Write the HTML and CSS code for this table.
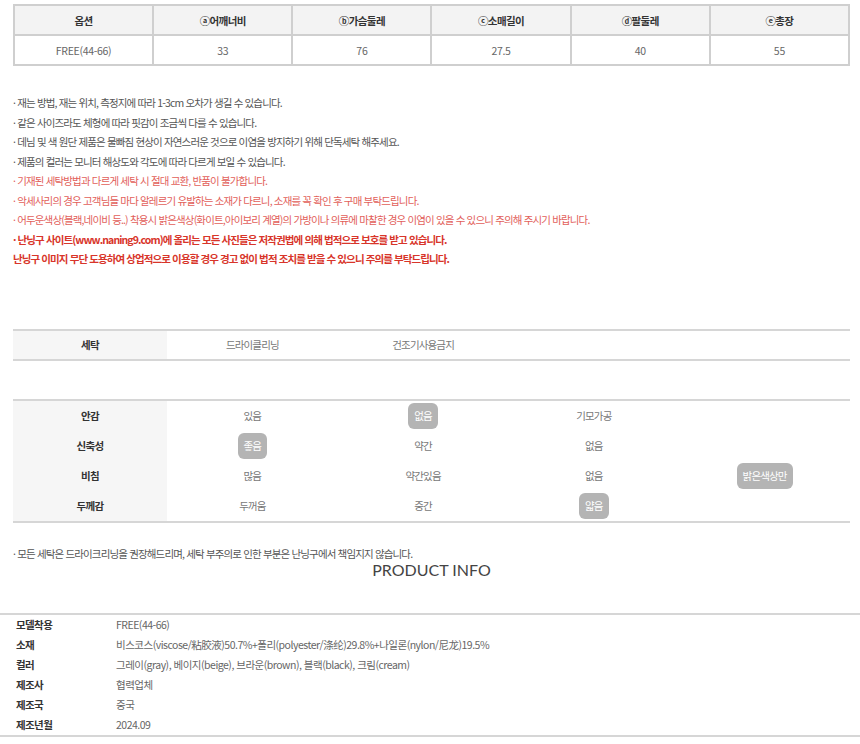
FILE: index.html
```html
<!DOCTYPE html>
<html lang="ko">
<head>
    <meta charset="UTF-8" />
    <title>상품 상세</title>
    <link rel="stylesheet" href="styles.css">
</head>
<body>
<div class="wrap">
    <table class="size">
        <tr>
            <th>옵션</th>
            <th>ⓐ어깨너비</th>
            <th>ⓑ가슴둘레</th>
            <th>ⓒ소매길이</th>
            <th>ⓓ팔둘레</th>
            <th>ⓔ총장</th>
        </tr>
        <tr>
            <td>FREE(44-66)</td>
            <td>33</td>
            <td>76</td>
            <td>27.5</td>
            <td>40</td>
            <td>55</td>
        </tr>
    </table>

    <ul class="notes">
        <li>· 재는 방법, 재는 위치, 측정지에 따라 1-3cm 오차가 생길 수 있습니다.</li>
        <li>· 같은 사이즈라도 체형에 따라 핏감이 조금씩 다를 수 있습니다.</li>
        <li>· 데님 및 색 원단 제품은 물빠짐 현상이 자연스러운 것으로 이염을 방지하기 위해 단독세탁 해주세요.</li>
        <li>· 제품의 컬러는 모니터 해상도와 각도에 따라 다르게 보일 수 있습니다.</li>
        <li class="red">· 기재된 세탁방법과 다르게 세탁 시 절대 교환, 반품이 불가합니다.</li>
        <li class="red">· 악세사리의 경우 고객님들 마다 알레르기 유발하는 소재가 다르니, 소재를 꼭 확인 후 구매 부탁드립니다.</li>
        <li class="red">· 어두운색상(블랙,네이비 등..) 착용시 밝은색상(화이트,아이보리 계열)의 가방이나 의류에 마찰한 경우 이염이 있을 수 있으니 주의해 주시기 바랍니다.</li>
        <li class="strong">· 난닝구 사이트(www.naning9.com)에 올리는 모든 사진들은 저작권법에 의해 법적으로 보호를 받고 있습니다.</li>
        <li class="strong">난닝구 이미지 무단 도용하여 상업적으로 이용할 경우 경고 없이 법적 조치를 받을 수 있으니 주의를 부탁드립니다.</li>
    </ul>

    <table class="grid wash">
        <tr>
            <th>세탁</th>
            <td>드라이클리닝</td>
            <td>건조기사용금지</td>
            <td></td>
            <td></td>
        </tr>
    </table>

    <table class="grid feel">
        <tr>
            <th>안감</th>
            <td>있음</td>
            <td><span class="on">없음</span></td>
            <td>기모가공</td>
            <td></td>
        </tr>
        <tr>
            <th>신축성</th>
            <td><span class="on">좋음</span></td>
            <td>약간</td>
            <td>없음</td>
            <td></td>
        </tr>
        <tr>
            <th>비침</th>
            <td>많음</td>
            <td>약간있음</td>
            <td>없음</td>
            <td><span class="on">밝은색상만</span></td>
        </tr>
        <tr>
            <th>두께감</th>
            <td>두꺼움</td>
            <td>중간</td>
            <td><span class="on">얇음</span></td>
            <td></td>
        </tr>
    </table>

    <p class="foot">· 모든 세탁은 드라이크리닝을 권장해드리며, 세탁 부주의로 인한 부분은 난닝구에서 책임지지 않습니다.</p>
    <h2 class="title">PRODUCT INFO</h2>
</div>

<table class="info">
    <tr><th>모델착용</th><td>FREE(44-66)</td></tr>
    <tr><th>소재</th><td>비스코스(viscose/粘胶液)50.7%+폴리(polyester/涤纶)29.8%+나일론(nylon/尼龙)19.5%</td></tr>
    <tr><th>컬러</th><td>그레이(gray), 베이지(beige), 브라운(brown), 블랙(black), 크림(cream)</td></tr>
    <tr><th>제조사</th><td>협력업체</td></tr>
    <tr><th>제조국</th><td>중국</td></tr>
    <tr><th>제조년월</th><td>2024.09</td></tr>
</table>
</body>
</html>
```

FILE: styles.css
```css
* {margin:0; padding:0;}
ul {list-style: none;}
body {
    font-family: "Noto Sans CJK KR", "Noto Sans", sans-serif;
    font-size: 10.5px;
    color: #555;
    background: #fff;
}
table {
    border-collapse: collapse;
    border-spacing: 0;
}
th, td {
    padding: 0;
}
.wrap {
    padding: 4px 10px 0 13px;
}

/* 사이즈표 */
.size {
    width: 837px;
    table-layout: fixed;
    border: 2px solid #cfcfcf;
}
.size th,
.size td {
    border: 2px solid #cfcfcf;
    text-align: center;
    height: 28px;
    letter-spacing: -0.6px;
}
.size th {
    background-color: #f3f3f3;
    color: #333;
    font-weight: bold;
}
.size td {
    color: #666;
    letter-spacing: -0.3px;
}

/* 안내문 */
.notes {
    margin-top: 27px;
    line-height: 19.5px;
    letter-spacing: -0.85px;
    color: #555;
}
.notes .red {
    color: #e2605a;
}
.notes .strong {
    color: #d8352a;
    font-weight: bold;
    letter-spacing: -0.9px;
}

/* 세탁 / 특성 표 */
.grid {
    width: 837px;
    table-layout: fixed;
    border-top: 2px solid #d6d6d6;
    border-bottom: 2px solid #d6d6d6;
}
.grid th {
    width: 154px;
    background-color: #f6f6f6;
    color: #333;
    font-weight: bold;
    text-align: center;
    letter-spacing: -0.6px;
}
.grid td {
    text-align: center;
    color: #777;
    letter-spacing: -0.85px;
}
.wash {
    margin-top: 60px;
}
.wash th,
.wash td {
    height: 28px;
}
.feel {
    margin-top: 38px;
}
.feel th,
.feel td {
    height: 30px;
}
.feel .on {
    display: inline-block;
    padding: 0 6px;
    line-height: 26px;
    border-radius: 6px;
    background-color: #b4b4b4;
    color: #fff;
}

.foot {
    margin-top: 23px;
    line-height: 16px;
    color: #555;
    letter-spacing: -0.85px;
}
.title {
    margin-top: -2px;
    text-align: center;
    font-family: "Lato", "Open Sans", sans-serif;
    font-size: 16px;
    font-weight: normal;
    color: #444;
    line-height: 20px;
}

/* 상품정보 */
.info {
    width: 100%;
    margin-top: 33px;
    border-top: 2px solid #d6d6d6;
    border-bottom: 2px solid #d6d6d6;
}
.info th,
.info td {
    height: 20px;
    text-align: left;
    letter-spacing: -0.5px;
}
.info th {
    width: 100px;
    padding-left: 16px;
    color: #333;
    font-weight: bold;
    letter-spacing: -0.6px;
}
.info td {
    color: #666;
}
```
